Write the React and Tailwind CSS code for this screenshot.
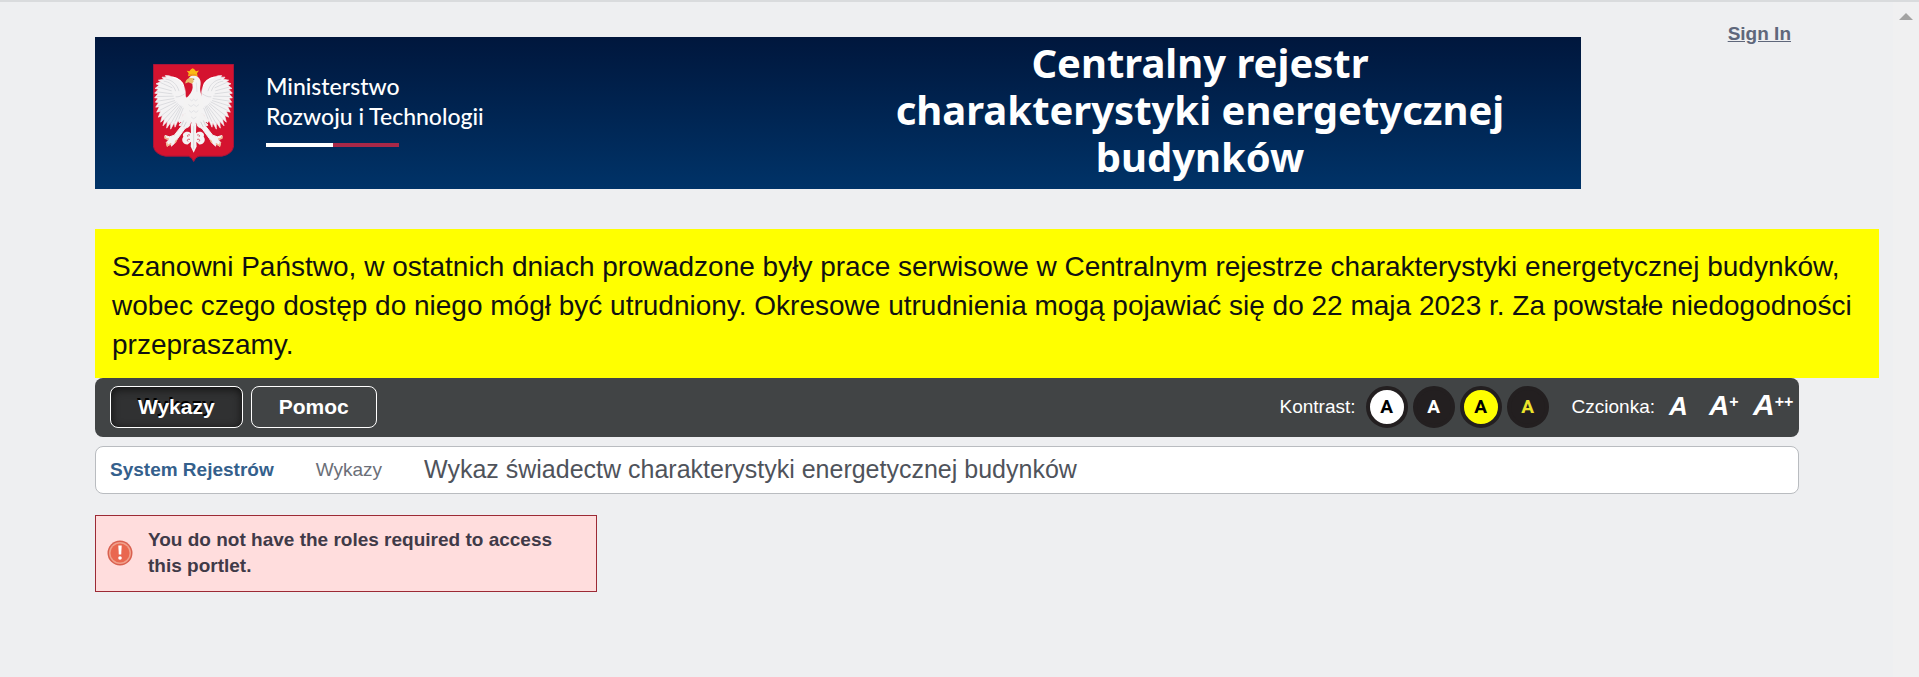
import clsx from "clsx";

const menu = [
  { label: "Wykazy", active: true },
  { label: "Pomoc", active: false },
];

const contrasts = [
  { name: "Kontrast domyślny", style: "bg-white text-black" },
  { name: "Kontrast biały na czarnym", style: "bg-[#231f20] text-white" },
  { name: "Kontrast czarny na żółtym", style: "bg-[#ffff00] text-black" },
  { name: "Kontrast żółty na czarnym", style: "bg-[#231f20] text-[#ece32b]" },
];

const fontSizes = [
  { plus: "", style: "w-10 text-[26px]" },
  { plus: "+", style: "w-11 text-[28px]" },
  { plus: "++", style: "w-11 text-[30px]" },
];

// One half of the eagle's wings, mirrored for the other side
function Wing() {
  return (
    <g>
      <path
        d="M181 150 C172 152 164 146 165 134 C166 112 150 88 128 84 L116 80 L105 79 L108 84 L95 84 L100 90 L84 93 L91 98 L77 104 L86 108 L74 118 L84 120 L73 132 L83 134 L73 146 L83 147 L75 159 L85 160 L76 174 L87 173 L79 189 L91 186 L84 204 L96 199 L91 219 L103 209 L98 230 L111 216 L109 237 L121 220 L121 240 L132 220 L134 234 L143 214 L148 222 L158 196 L183 186 Z"
        fill="#f4f3f4"
        stroke="#f4f3f4"
        strokeWidth="2"
      />
      <g fill="none" stroke="#cfd0d5" strokeWidth="2">
        <path d="M163 134 C154 140 146 144 136 143" />
        <path d="M90 100 L126 116 M83 114 L124 125 M80 128 L126 134 M80 142 L130 141" />
        <path d="M81 156 L132 148 M83 170 L134 154 M87 184 L138 158 M94 199 L142 162" />
        <path d="M102 210 L145 165 M111 218 L149 168 M122 222 L152 170 M134 218 L155 172 M145 211 L159 176" />
        <path d="M106 90 C124 92 140 104 146 126 M100 96 C118 98 130 108 136 126" />
      </g>
      <path d="M160 112 C158 98 144 87 126 84" fill="none" stroke="#ffffff" strokeWidth="4" />
    </g>
  );
}

function Leg() {
  return (
    <g>
      <path
        d="M178 186 L160 195 L148 215 L154 220 L146 228 L154 230 L132 258 L118 263 L104 259 L104 268 L116 271 L108 280 L111 291 L123 283 L123 291 L133 282 L142 268 L164 238 L176 232 L184 210 Z"
        fill="#f3f2f2"
        stroke="#f3f2f2"
        strokeWidth="3"
      />
      <path d="M104 260 L105 267 L116 270 M109 280 L111 290 L122 283 M134 281 L139 272" fill="none" stroke="#f0b58a" strokeWidth="4" />
      <path d="M160 214 L154 228 M168 218 L160 234" stroke="#c2c3c8" strokeWidth="2" />
    </g>
  );
}

function Emblem() {
  return (
    <svg viewBox="68 45 243 293" className="h-[98px] w-[81px] shrink-0" role="img" aria-label="Godło Polski">
      <path
        d="M69 46 H310 V290 Q307 315 275 321 H206 Q195 323 190 337 Q185 323 174 321 H105 Q72 315 69 290 Z"
        fill="#d4132f"
        stroke="#a9143a"
        strokeWidth="3"
      />
      <Wing />
      <g transform="translate(379 0) scale(-1 1)">
        <Wing />
      </g>
      <Leg />
      <g transform="translate(379 0) scale(-1 1)">
        <Leg />
      </g>
      {/* tail */}
      <path
        d="M181 222 L198 222 L197 252 C211 242 225 252 220 263 C228 272 221 287 207 286 L198 278 L199 292 L190 311 L181 292 L182 278 L172 286 C158 287 151 272 159 263 C154 252 168 242 182 252 Z"
        fill="#f4f3f4"
      />
      <path
        d="M179 258 C173 255 169 259 173 263 M200 258 C206 255 210 259 206 263 M179 271 C173 268 168 273 173 277 M200 271 C206 268 211 273 206 277"
        fill="none"
        stroke="#d9596a"
        strokeWidth="3"
      />
      <path d="M190 226 V300" stroke="#c8c9ce" strokeWidth="2" />
      {/* body and head */}
      <path
        d="M175 94 C174 82 185 77 196 80 C208 84 214 96 210 112 C207 126 215 140 218 152 C222 178 214 196 202 212 L190 232 L178 212 C166 196 158 178 161 152 C172 144 186 130 187 114 L186 104 Z"
        fill="#f4f3f3"
      />
      <path
        d="M178 150 L184 155 L190 150 L196 155 L202 150 M174 166 L182 172 L190 166 L198 172 L206 166 M176 184 L183 190 L190 184 L197 190 L204 184 M182 203 L190 209 L198 203 M198 100 L200 128"
        fill="none"
        stroke="#dadbdf"
        strokeWidth="2"
      />
      <path d="M188 87 C176 84 165 90 165 103 L174 99 L185 104 L190 97 Z" fill="#e8bd6c" />
      <circle cx="190" cy="90" r="2" fill="#7c5a38" />
      {/* crown */}
      <path
        d="M173 81 L175 72 L169 65 L177 66 L182 60 L187 57 L192 60 L197 66 L206 64 L200 72 L202 82 Q188 77 173 81 Z"
        fill="#fbb917"
      />
      <path d="M175 77 Q188 73 200 78" fill="none" stroke="#e58a1d" strokeWidth="2" />
    </svg>
  );
}

function Banner() {
  return (
    <div className="mt-[13px] flex h-[152px] w-full max-w-[1486px] items-center bg-linear-to-b from-[#00173d] to-[#003368] pl-[58px] text-white">
      <Emblem />
      <div className="mb-2 ml-8 shrink-0 font-['Lato',sans-serif] text-[23px] leading-[30px] font-medium">
        <p>Ministerstwo</p>
        <p>Rozwoju i Technologii</p>
        <div className="mt-3 flex h-1 w-[133px]">
          <span className="flex-1 bg-white" />
          <span className="flex-1 bg-[#a82848]" />
        </div>
      </div>
      <h1 className="mr-[64px] mb-2 ml-auto w-[634px] text-center font-['Noto_Sans',sans-serif] text-[40px] leading-[47px] font-bold">
        Centralny rejestr charakterystyki energetycznej budynków
      </h1>
    </div>
  );
}

function Toolbar() {
  return (
    <div className="flex h-[59px] items-start justify-between rounded-lg bg-[#414445] pt-2 pr-0.5 pl-[15px] text-white">
      <nav className="flex gap-2">
        {menu.map((item) => (
          <a
            key={item.label}
            href="#"
            className={clsx(
              "flex h-[42px] items-center rounded-lg border border-white px-[27px] text-[21px] font-bold",
              item.active && "bg-[#303132] shadow-[inset_0_2px_8px_#111] [text-shadow:-1px_-2px_0_#000]"
            )}
          >
            {item.label}
          </a>
        ))}
      </nav>

      <div className="flex items-center">
        <span className="mr-[10px] text-[19px] leading-6">Kontrast:</span>
        <div className="flex gap-[5px]">
          {contrasts.map((c) => (
            <button
              key={c.name}
              type="button"
              aria-label={c.name}
              className={clsx(
                "flex size-[42px] items-center justify-center rounded-full border-4 border-[#231f20] font-['Roboto',sans-serif] text-[19px] font-bold",
                c.style
              )}
            >
              A
            </button>
          ))}
        </div>
        <span className="mr-[14px] ml-[23px] text-[19px] leading-6">Czcionka:</span>
        <div className="flex items-baseline">
          {fontSizes.map((f) => (
            <button
              key={f.style}
              type="button"
              className={clsx("flex items-baseline leading-8 font-bold italic", f.style)}
            >
              A
              <span className="relative -top-2 text-base leading-8 not-italic">{f.plus}</span>
            </button>
          ))}
        </div>
      </div>
    </div>
  );
}

function Alert() {
  return (
    <div
      role="alert"
      className="mt-[21px] flex w-[502px] items-center border border-[#9c2a35] bg-[#ffdddd] pt-[11px] pr-8 pb-3 pl-[11px] text-[19px] leading-[26px] font-bold text-[#403a48]"
    >
      <svg viewBox="0 0 26 26" className="mr-[15px] size-[26px] shrink-0" aria-hidden="true">
        <circle cx="13" cy="13" r="12.5" fill="#d9604f" />
        <circle cx="13" cy="13" r="11" fill="#f0a08c" />
        <circle cx="13" cy="13" r="9.5" fill="#e9674f" />
        <path d="M11.3 5.5h3.4l-.5 9h-2.4z" fill="#fff" />
        <circle cx="13" cy="18" r="1.8" fill="#fff" />
      </svg>
      <p>You do not have the roles required to access this portlet.</p>
    </div>
  );
}

export default function App() {
  return (
    <div className="flex min-h-screen border-t-2 border-[#d9dbdd] bg-[#eeeff1] font-['Liberation_Sans',Arial,sans-serif]">
      <div className="min-w-0 flex-1 pt-[22px] pr-[94px] pl-[95px]">
        <header className="flex items-start justify-between">
          <Banner />
          <a href="#" className="mr-2 shrink-0 text-[19px] leading-5 font-bold text-[#5f677b] underline">
            Sign In
          </a>
        </header>

        {/* Service notice, wider than the page column */}
        <p className="mt-10 -mr-20 bg-[#ffff00] px-[17px] pt-[18px] pb-[14px] text-[28px] leading-[39px] text-[#111]">
          Szanowni Państwo, w ostatnich dniach prowadzone były prace serwisowe w Centralnym rejestrze charakterystyki
          energetycznej budynków, wobec czego dostęp do niego mógł być utrudniony. Okresowe utrudnienia mogą pojawiać
          się do 22 maja 2023 r. Za powstałe niedogodności przepraszamy.
        </p>

        <Toolbar />

        <nav className="mt-[9px] flex h-12 items-center rounded-lg border border-[#b9bcc0] bg-white pl-[14px]">
          <a href="#" className="text-[19px] font-bold text-[#34608c]">
            System Rejestrów
          </a>
          <a href="#" className="ml-[42px] text-[19px] text-[#6b6f78]">
            Wykazy
          </a>
          <span className="ml-[42px] text-[25px] text-[#4f535b]">
            Wykaz świadectw charakterystyki energetycznej budynków
          </span>
        </nav>

        <Alert />
      </div>

      {/* Scroll track */}
      <div className="flex w-[26px] justify-center bg-[#f0f0f1] pt-[11px]">
        <svg viewBox="0 0 14 7" className="h-[7px] w-[14px]" aria-hidden="true">
          <path d="M7 0l7 7H0z" fill="#a3a3a3" />
        </svg>
      </div>
    </div>
  );
}
